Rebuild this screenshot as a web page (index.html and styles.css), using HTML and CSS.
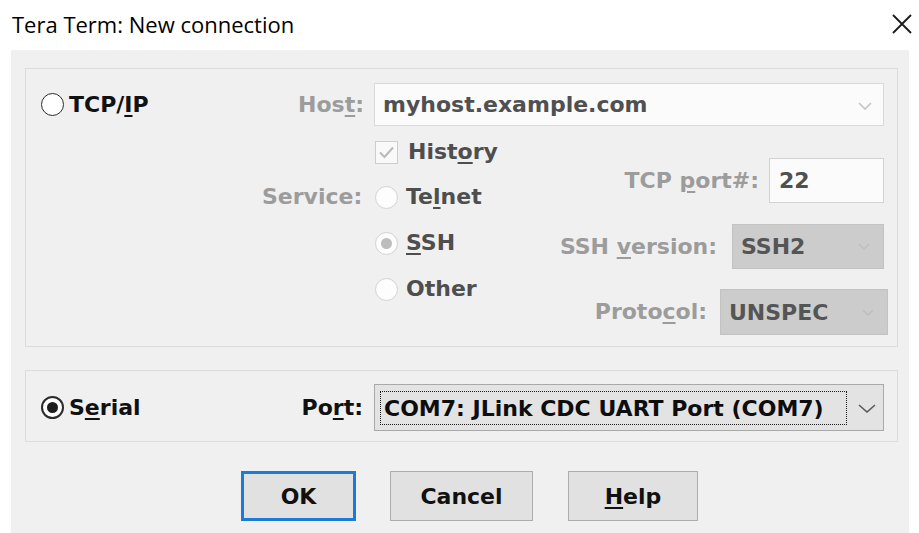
FILE: index.html
```html
<!DOCTYPE html>
<html lang="en">
<head>
<meta charset="utf-8">
<title>Tera Term: New connection</title>
<link rel="stylesheet" href="styles.css">
</head>
<body>
<div class="window">
  <header class="titlebar">
    <span class="title">Tera Term: New connection</span>
    <svg class="close" width="22" height="22" viewBox="0 0 22 22" aria-label="Close">
      <path d="M2 2 L20 20 M20 2 L2 20" stroke="#1a1a1a" stroke-width="1.8" fill="none"/>
    </svg>
  </header>

  <main class="dialog">
    <section class="group tcp">
      <div class="choice c-main">
        <span class="radio"></span>
        <span class="caption">TCP/<u>I</u>P</span>
      </div>
      <span class="label off host-label">Hos<u>t</u>:</span>
      <div class="combo host">
        <span class="value">myhost.example.com</span>
        <svg class="chev" width="14" height="8" viewBox="0 0 14 8"><path d="M1 1 L7 7 L13 1" stroke="#c4c4c4" stroke-width="1.6" fill="none"/></svg>
      </div>

      <div class="choice opt history">
        <span class="check">
          <svg width="21" height="21" viewBox="0 0 21 21"><path d="M4 10.5 L8.5 15 L17 5.5" stroke="#b9b9b9" stroke-width="2" fill="none"/></svg>
        </span>
        <span class="caption dim">Hist<u>o</u>ry</span>
      </div>

      <span class="label off service-label">Service:</span>
      <div class="choice opt telnet">
        <span class="radio disabled"></span>
        <span class="caption dim">Te<u>l</u>net</span>
      </div>
      <div class="choice opt ssh">
        <span class="radio disabled checked"></span>
        <span class="caption dim"><u>S</u>SH</span>
      </div>
      <div class="choice opt other">
        <span class="radio disabled"></span>
        <span class="caption dim">Other</span>
      </div>

      <div class="side">
        <div class="field port">
          <span class="label off">TCP <u>p</u>ort#:</span>
          <div class="edit">22</div>
        </div>
        <div class="field version">
          <span class="label off">SSH <u>v</u>ersion:</span>
          <div class="drop">
            <span class="value">SSH2</span>
            <svg class="chev" width="12" height="7" viewBox="0 0 12 7"><path d="M1 1 L6 6 L11 1" stroke="#bdbdbd" stroke-width="1.4" fill="none"/></svg>
          </div>
        </div>
        <div class="field protocol">
          <span class="label off">Proto<u>c</u>ol:</span>
          <div class="drop wide">
            <span class="value">UNSPEC</span>
            <svg class="chev" width="12" height="7" viewBox="0 0 12 7"><path d="M1 1 L6 6 L11 1" stroke="#bdbdbd" stroke-width="1.4" fill="none"/></svg>
          </div>
        </div>
      </div>
    </section>

    <section class="group serial">
      <div class="choice c-main">
        <span class="radio checked"></span>
        <span class="caption">S<u>e</u>rial</span>
      </div>
      <span class="label port-label">Po<u>r</u>t:</span>
      <div class="select">
        <span class="focus">COM7: JLink CDC UART Port (COM7)</span>
        <svg class="chev" width="18" height="9" viewBox="0 0 18 9"><path d="M1 1 L9 8 L17 1" stroke="#5a5a5a" stroke-width="1.6" fill="none"/></svg>
      </div>
    </section>

    <div class="buttons">
      <button class="btn ok" type="button">OK</button>
      <button class="btn cancel" type="button">Cancel</button>
      <button class="btn help" type="button"><u>H</u>elp</button>
    </div>
  </main>
</div>
</body>
</html>
```

FILE: styles.css
```css
* {
  box-sizing: border-box;
}

html, body {
  margin: 0;
  padding: 0;
  background: #ffffff;
}

body {
  width: 919px;
  height: 533px;
  overflow: hidden;
  font-family: "DejaVu Sans", "Liberation Sans", sans-serif;
  font-weight: bold;
  font-size: 22px;
  color: #111;
}

u {
  text-decoration-thickness: 2px;
  text-underline-offset: 3px;
}

/* ---------- title bar ---------- */
.titlebar {
  height: 50px;
  display: flex;
  align-items: center;
  justify-content: space-between;
  padding: 0 6px 0 12px;
}

.title {
  font-family: "Open Sans", "Noto Sans", sans-serif;
  font-weight: normal;
  font-size: 22px;
  color: #000;
  padding-bottom: 2px;
}

.close {
  margin-bottom: 2px;
}

/* ---------- dialog body ---------- */
.dialog {
  margin-left: 11px;
  width: 898px;
  height: 483px;
  background: #f0f0f0;
  padding: 18px 0 0 14px;
}

.group {
  width: 873px;
  border: 1px solid #dcdcdc;
  display: grid;
  grid-template-columns: 209px 102px 510px;
  column-gap: 10px;
}

.tcp {
  padding: 14px 13px 11px 17px;
  grid-template-rows: 43px 48px 46px 46px auto;
}

.serial {
  margin-top: 23px;
  padding: 13px 13px 10px 17px;
  grid-template-rows: 47px;
}

.choice {
  display: flex;
  align-items: center;
  gap: 8px;
  line-height: 26px;
}

.c-main {
  grid-column: 1;
  grid-row: 1;
  gap: 5px;
  margin-left: -2px;
}

.caption {
  color: #111;
}

.caption.dim {
  color: #4e4e4e;
}

.label {
  align-self: center;
  text-align: right;
  line-height: 26px;
  white-space: nowrap;
}

.label.off {
  color: #9c9c9c;
}

.host-label {
  grid-column: 2;
  grid-row: 1;
}

.service-label {
  grid-column: 2;
  grid-row: 3;
  margin-right: 2px;
}

.port-label {
  grid-column: 2;
  grid-row: 1;
  margin-right: 1px;
}

/* option column under the host box */
.opt {
  grid-column: 3;
  justify-self: start;
  align-self: start;
  height: 46px;
  margin-left: 1px;
}

.history { grid-row: 2; height: 48px; gap: 10px; padding-top: 4px; }
.telnet { grid-row: 3; }
.ssh { grid-row: 4; }
.other { grid-row: 5; }

/* ---------- radios and checks ---------- */
.radio {
  width: 23px;
  height: 23px;
  border-radius: 50%;
  border: 1.6px solid #2b2b2b;
  background: #fff;
  display: flex;
  align-items: center;
  justify-content: center;
  flex: none;
}

.radio.checked {
  border-width: 2px;
}

.radio.checked::after {
  content: "";
  width: 11px;
  height: 11px;
  border-radius: 50%;
  background: #1e1e1e;
}

.radio.disabled {
  border: 1.5px solid #d2d2d2;
  background: #fdfdfd;
}

.radio.disabled.checked::after {
  background: #bdbdbd;
}

.check {
  width: 23px;
  height: 23px;
  border: 1px solid #cdcdcd;
  background: #f9f9f9;
  display: flex;
  align-items: center;
  justify-content: center;
  flex: none;
}

/* ---------- inputs ---------- */
.combo {
  grid-column: 3;
  grid-row: 1;
  display: flex;
  align-items: center;
  justify-content: space-between;
  background: #fbfbfb;
  border: 1px solid #d9d9d9;
  padding: 0 11px 0 8px;
  color: #505050;
}

.combo .chev {
  margin-top: 3px;
}

.side {
  grid-column: 3;
  grid-row: 2 / 6;
  justify-self: end;
  align-self: start;
  display: flex;
  flex-direction: column;
  align-items: flex-end;
}

.field {
  display: flex;
  align-items: stretch;
  gap: 12px;
}

.port {
  margin-top: 32px;
  height: 45px;
  gap: 10px;
}

.version {
  margin-top: 21px;
  height: 45px;
  gap: 15px;
}

.protocol {
  margin-top: 20px;
  height: 46px;
  gap: 13px;
  margin-right: -4px;
}

.edit {
  width: 115px;
  background: #fbfbfb;
  border: 1px solid #d2d2d2;
  padding: 0 9px;
  display: flex;
  align-items: center;
  color: #505050;
}

.drop {
  width: 152px;
  background: #cccccc;
  border: 1px solid #c2c2c2;
  padding: 0 13px 0 8px;
  display: flex;
  align-items: center;
  justify-content: space-between;
  color: #555;
}

.drop.wide {
  width: 168px;
}

.select {
  grid-column: 3;
  grid-row: 1;
  background: #e3e3e3;
  border: 1px solid #a9a9a9;
  display: flex;
  align-items: center;
  padding: 6px 7px 5px 5px;
  gap: 11px;
}

.focus {
  align-self: stretch;
  width: 467px;
  border: 1px dotted #1a1a1a;
  display: flex;
  align-items: center;
  padding-left: 3px;
  white-space: nowrap;
  color: #0d0d0d;
}

/* ---------- button row ---------- */
.buttons {
  display: flex;
  margin-top: 29px;
  padding-left: 216px;
}

.btn {
  height: 50px;
  font: inherit;
  color: #111;
  background: #e1e1e1;
  border: 1px solid #adadad;
  padding: 0;
}

.ok {
  width: 115px;
  border: 3px solid #1c7bd6;
}

.cancel {
  width: 143px;
  margin-left: 34px;
}

.help {
  width: 130px;
  margin-left: 35px;
}
```
